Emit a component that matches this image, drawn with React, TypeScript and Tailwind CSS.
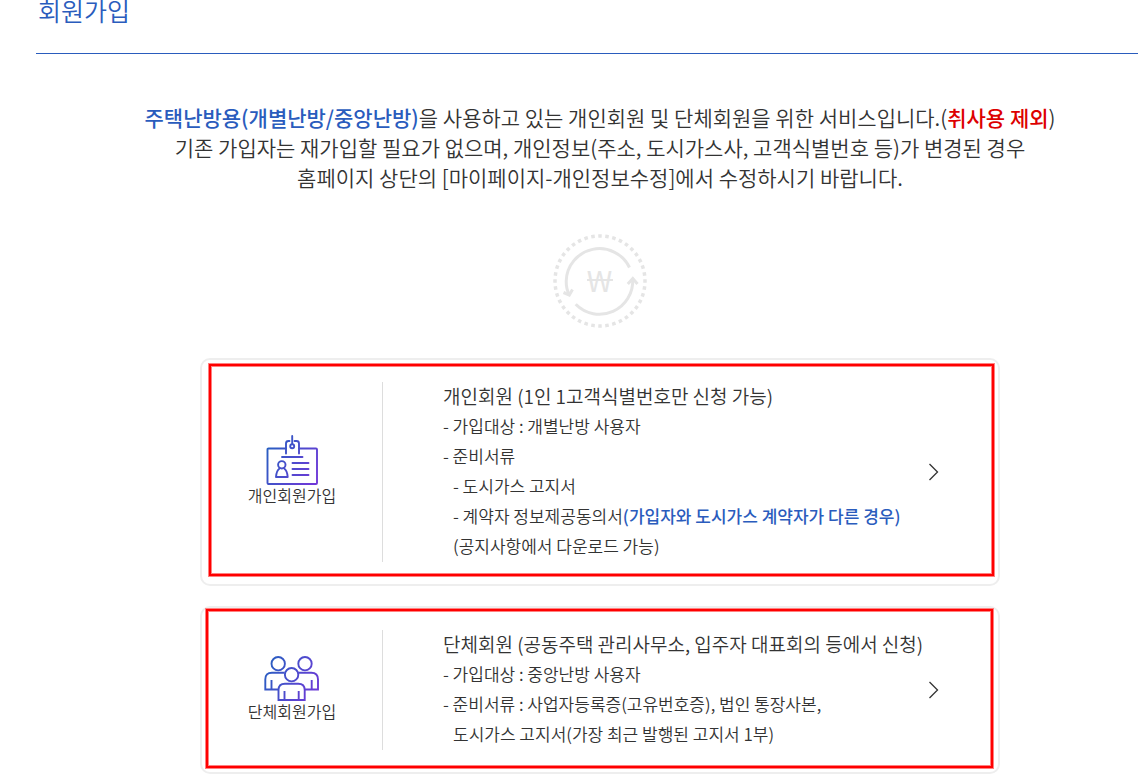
import type { ReactNode } from 'react';

type MemberCardProps = {
  icon: ReactNode;
  label: string;
  title: string;
  markClass: string;
  children: ReactNode;
};

function WonCycleIcon() {
  return (
    <svg width="94" height="94" viewBox="0 0 94 94" fill="none" stroke="#e5e5e5" strokeWidth="3" aria-hidden="true">
      <circle cx="47" cy="47" r="45" pathLength="80" strokeDasharray="1 1" strokeDashoffset="0.5" strokeWidth="3.5" />
      <path d="M76.5 33.5A33.3 33.3 0 0 0 13.2 47Q13.2 55 16 60" />
      <path d="M10.5 58.5L16.3 61L19.5 55.5" />
      <path d="M22.7 70.3A33.3 33.3 0 0 0 79.7 45" />
      <path d="M74.8 50L79.8 44.5L84.5 50" />
      <text
        x="46.5"
        y="58"
        textAnchor="middle"
        fontSize="29"
        fill="#e5e5e5"
        stroke="none"
        className="font-['Noto_Sans_CJK_KR',sans-serif] font-normal"
      >
        W
      </text>
      <path d="M34 46H60" strokeWidth="2" />
    </svg>
  );
}

function IdCardIcon() {
  return (
    <svg width="52" height="50" viewBox="0 0 52 50" fill="none" stroke="url(#idCard)" strokeWidth="1.9" strokeLinecap="round" strokeLinejoin="round" aria-hidden="true">
      <defs>
        <linearGradient id="idCard" gradientUnits="userSpaceOnUse" x1="0" y1="10" x2="52" y2="42">
          <stop offset="0" stopColor="#2560c0" />
          <stop offset="1" stopColor="#7038d8" />
        </linearGradient>
      </defs>
      <path d="M20 13.5H2.5Q1.5 13.5 1.5 14.5V48Q1.5 49 2.5 49H50Q51 49 51 48V14.5Q51 13.5 50 13.5H33" />
      <path d="M20 18.5V8.5Q20 6 22.5 6H23.5M28.5 6H30.5Q33 6 33 8.5V18.5" />
      <path d="M26.2 1V9" />
      <circle cx="26.2" cy="11.2" r="2" />
      <path d="M16 22H36.5" />
      <circle cx="15.8" cy="29.8" r="3.7" />
      <path d="M13.5 33.5Q10.5 35.5 10 42H21.7Q21.2 35.5 18.2 33.5" />
      <path d="M26.5 28H42.5M26.5 34H42.5M26.5 40H42.5" />
    </svg>
  );
}

function GroupIcon() {
  return (
    <svg width="56" height="45" viewBox="0 0 56 45" fill="none" stroke="url(#group)" strokeWidth="1.9" aria-hidden="true">
      <defs>
        <linearGradient id="group" gradientUnits="userSpaceOnUse" x1="0" y1="8" x2="55" y2="36">
          <stop offset="0" stopColor="#2560c0" />
          <stop offset="1" stopColor="#7038d8" />
        </linearGradient>
      </defs>
      <circle cx="14.2" cy="7.7" r="6.7" />
      <circle cx="41" cy="7.7" r="6.7" />
      <circle cx="27.6" cy="18.7" r="6.7" />
      <path d="M20.5 16.7H8Q1.3 16.7 1.3 23.5V33.5H14.3M7.5 24V33.5" />
      <path d="M34.8 16.7H47.3Q54 16.7 54 23.5V33.5H41M47.7 24V33.5" />
      <path d="M14.5 44V34Q14.5 27.7 21 27.7H34.2Q40.7 27.7 40.7 34V44ZM20.5 35V44M34.7 35V44" />
    </svg>
  );
}

function MemberCard({ icon, label, title, markClass, children }: MemberCardProps) {
  return (
    <a href="#" className="relative flex rounded-[10px] border-2 border-[#eee] bg-white">
      <div className="my-[22px] flex w-[181px] shrink-0 flex-col items-center justify-center border-r border-[#ddd] pb-1">
        {icon}
        <span className="text-base leading-5">{label}</span>
      </div>
      <div className="min-w-0 flex-1 pt-[21px] pb-[23px] pl-[60px] text-[17px] leading-[30px]">
        <h2 className="text-[19px] leading-[30px]">{title}</h2>
        {children}
      </div>
      <div className="flex w-[70px] shrink-0 items-center">
        <svg width="12" height="18" viewBox="0 0 12 18" fill="none" stroke="#333" strokeWidth="1.3" aria-hidden="true">
          <path d="M1.5 1L9.5 9L1.5 17" />
        </svg>
      </div>
      {/* red highlight frame */}
      <span
        className={`pointer-events-none absolute border-2 border-[#f00] shadow-[0_0_0_1px_#ff8080,inset_0_0_0_1px_#ff8080] ${markClass}`}
      />
    </a>
  );
}

export default function App() {
  return (
    <div className="overflow-hidden bg-white font-['Noto_Sans_CJK_KR',sans-serif] font-[350] text-[#333]">
      <header className="ml-9 border-b border-[#2a5cbd] pb-6">
        <h1 className="-mt-2 pl-[2px] text-[25px] leading-[37px] text-[#2a5cbd]">회원가입</h1>
      </header>

      <main className="pt-12 pb-[9px] pl-[62px]">
        <p className="text-center text-[21px] leading-[30px]">
          <strong className="font-medium text-[#2a5cbd]">주택난방용(개별난방/중앙난방)</strong>을 사용하고 있는 개인회원 및
          단체회원을 위한 서비스입니다.(<strong className="font-medium text-[#d00]">취사용 제외</strong>)
          <br />
          기존 가입자는 재가입할 필요가 없으며, 개인정보(주소, 도시가스사, 고객식별번호 등)가 변경된 경우
          <br />
          홈페이지 상단의 [마이페이지-개인정보수정]에서 수정하시기 바랍니다.
        </p>

        <div className="mt-[42px] flex justify-center">
          <WonCycleIcon />
        </div>

        <div className="mx-auto mt-[30px] flex max-w-[800px] flex-col gap-5">
          <MemberCard
            icon={<IdCardIcon />}
            label="개인회원가입"
            title="개인회원 (1인 1고객식별번호만 신청 가능)"
            markClass="top-1 right-1 bottom-2 left-[7px]"
          >
            <p>- 가입대상 : 개별난방 사용자</p>
            <p>- 준비서류</p>
            <p className="pl-[10px]">- 도시가스 고지서</p>
            <p className="pl-[10px]">
              - 계약자 정보제공동의서
              <strong className="font-medium text-[#2a5cbd]">(가입자와 도시가스 계약자가 다른 경우)</strong>
            </p>
            <p className="pl-[10px]">(공지사항에서 다운로드 가능)</p>
          </MemberCard>

          <MemberCard
            icon={<GroupIcon />}
            label="단체회원가입"
            title="단체회원 (공동주택 관리사무소, 입주자 대표회의 등에서 신청)"
            markClass="top-px right-[5px] bottom-1 left-1"
          >
            <p>- 가입대상 : 중앙난방 사용자</p>
            <p>- 준비서류 : 사업자등록증(고유번호증), 법인 통장사본,</p>
            <p className="pl-[10px]">도시가스 고지서(가장 최근 발행된 고지서 1부)</p>
          </MemberCard>
        </div>
      </main>
    </div>
  );
}
